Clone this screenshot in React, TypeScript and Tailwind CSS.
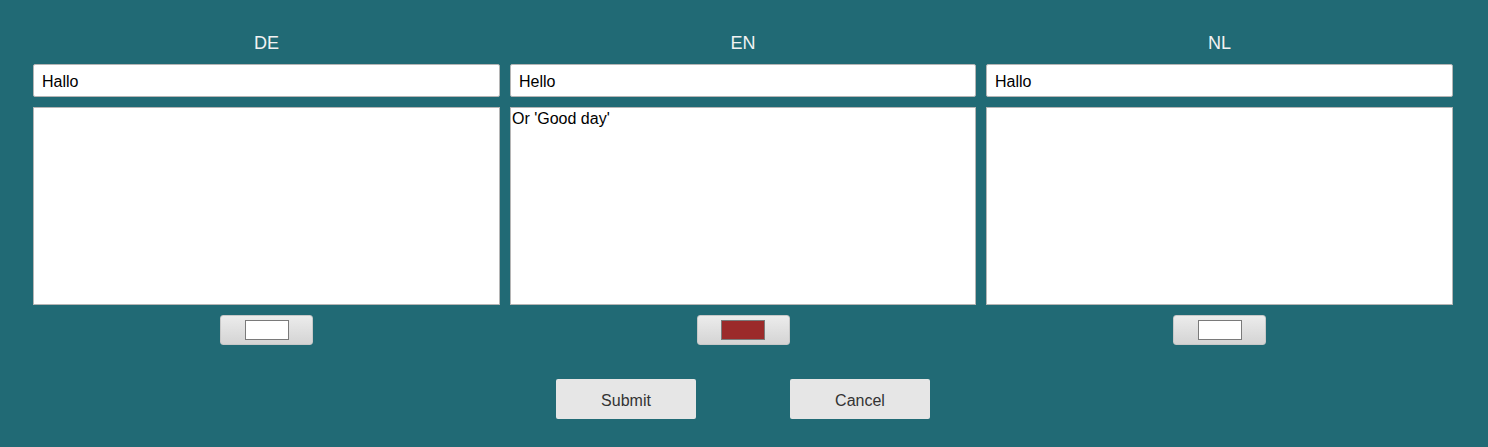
import React from "react";

const cols = [
  { lang: "DE", title: "Hallo", desc: "", color: "#ffffff" },
  { lang: "EN", title: "Hello", desc: "Or 'Good day'", color: "#9b2a2a" },
  { lang: "NL", title: "Hallo", desc: "", color: "#ffffff" },
];

export default function App() {
  return (
    <div
      className="w-[1488px] h-[447px] bg-[#216a75] pt-[32px] pl-[33px]"
      style={{ fontFamily: "'Liberation Sans', Arial, sans-serif" }}
    >
      <div className="grid w-[1420px] grid-cols-[467px_466px_467px] gap-x-[10px]">
        {cols.map((c) => (
          <div key={c.lang} className="flex flex-col">
            <div className="h-[22px] text-center text-[18px] leading-[22px] text-[#f2f2f2]">
              {c.lang}
            </div>
            <input
              readOnly
              value={c.title}
              className="mt-[10px] h-[33px] w-full rounded-[2px] border border-[#b5b5b5] bg-white px-[8px] pt-[2px] text-[16px] text-black outline-none"
            />
            <textarea
              readOnly
              value={c.desc}
              className="mt-[10px] h-[198px] w-full resize-none border border-[#b5b5b5] bg-white p-0 pl-[1px] pt-[1px] text-[16px] leading-[19px] text-black outline-none"
            />
            <div className="mt-[10px] flex justify-center">
              <button className="flex h-[30px] w-[93px] items-center justify-center rounded-[3px] border border-[#c8c8c8] bg-gradient-to-b from-[#ececec] to-[#d4d4d4]">
                <span
                  className="block h-[20px] w-[44px] border border-[#7a7a7a]"
                  style={{ backgroundColor: c.color }}
                />
              </button>
            </div>
          </div>
        ))}
      </div>
      <div className="mt-[34px] flex w-[1420px] justify-center gap-[94px]">
        <button className="h-[40px] w-[140px] rounded-[2px] bg-[#e6e6e6] pt-[3px] text-[16px] text-[#333]">
          Submit
        </button>
        <button className="h-[40px] w-[140px] rounded-[2px] bg-[#e6e6e6] pt-[3px] text-[16px] text-[#333]">
          Cancel
        </button>
      </div>
    </div>
  );
}
